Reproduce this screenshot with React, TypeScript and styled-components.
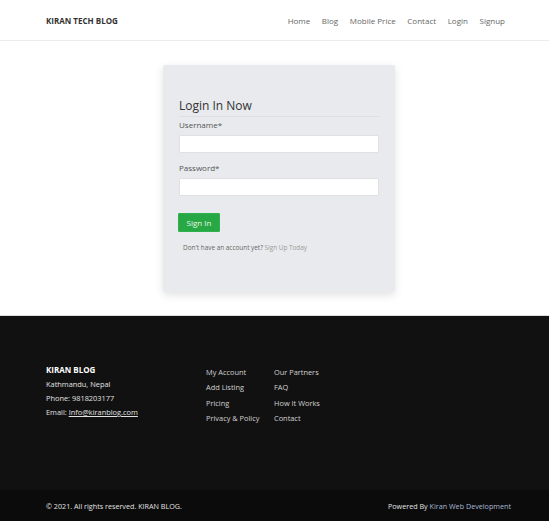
import React from "react";
import styled, { createGlobalStyle } from "styled-components";

const Global = createGlobalStyle`
  * { box-sizing: border-box; }
  body { margin: 0; font-family: "Open Sans", "Noto Sans", sans-serif; background: #fff; }
  a { text-decoration: none; color: inherit; }
`;

const Header = styled.header`
  height: 41px;
  border-bottom: 1px solid #ececec;
  background: #fff;
`;

const Container = styled.div<{ $right: number }>`
  margin: 0 ${(p) => p.$right}px 0 46px;
  height: 100%;
  display: flex;
  align-items: center;
  justify-content: space-between;
`;

const Brand = styled.a`
  font-size: 8px;
  font-weight: 700;
  color: #333;
`;

const Nav = styled.nav`
  display: flex;
  gap: 11.6px;
`;

const NavLink = styled.a`
  font-size: 8px;
  color: #666;
`;

const Main = styled.main`
  height: 274px;
  display: flex;
  justify-content: center;
  padding: 24px 0 0 9px;
`;

const Card = styled.div`
  width: 232px;
  height: 227px;
  background: #e8eaed;
  border-radius: 2px;
  box-shadow: 0 3px 8px rgba(0, 0, 0, 0.12);
  padding: 32px 16px 0 16px;
`;

const Title = styled.h2`
  margin: 0;
  font-size: 12px;
  font-weight: 400;
  color: #333;
  padding-bottom: 2px;
  border-bottom: 1px solid #dcdfe3;
`;

const Label = styled.label<{ $top: number }>`
  display: block;
  font-size: 8px;
  color: #555;
  margin-top: ${(p) => p.$top}px;
  height: 11px;
  line-height: 11px;
`;

const Input = styled.input`
  display: block;
  width: 200px;
  height: 18px;
  margin-top: 5px;
  border: 1px solid #e0e0e0;
  background: #fff;
  border-radius: 1px;
  outline: none;
`;

const Button = styled.button`
  display: block;
  margin: 17px 0 0 -1px;
  width: 42px;
  height: 19px;
  background: #28a745;
  border: 1px solid #2fb14d;
  color: #e9f7ec;
  font-family: "Open Sans", sans-serif;
  font-size: 8px;
  padding: 0;
  border-radius: 1px;
`;

const Note = styled.p`
  margin: 11px 0 0 4px;
  font-size: 6.4px;
  color: #666;
`;

const NoteLink = styled.a`
  color: #9a9a9a;
`;

const Footer = styled.footer`
  background: #111;
  border-top: 1px solid #ddd;
`;

const FooterTop = styled.div`
  margin: 0 0 0 46px;
  height: 174px;
  display: grid;
  grid-template-columns: 160px 68px 80px;
  padding-top: 47px;
`;

const FooterCol = styled.div`
  display: flex;
  flex-direction: column;
`;

const FooterTitle = styled.div`
  font-size: 8px;
  font-weight: 700;
  color: #fff;
  line-height: 14px;
`;

const FooterText = styled.div`
  font-size: 7.4px;
  color: #e2e2e2;
  line-height: 14px;
`;

const Mail = styled.a`
  text-decoration: underline;
`;

const LinkList = styled.ul`
  list-style: none;
  margin: 2px 0 0 0;
  padding: 0;
`;

const LinkItem = styled.li`
  font-size: 7.4px;
  color: #d2d2d2;
  line-height: 15.3px;
`;

const Bottom = styled.div`
  background: #0b0b0b;
  height: 31px;
`;

const Small = styled.span`
  font-size: 7.2px;
  color: #e2e2e2;
`;

const Highlight = styled.a`
  color: #a9b8d6;
`;

export default function App() {
  return (
    <>
      <Global />
      <Header>
        <Container $right={44}>
          <Brand href="#">KIRAN TECH BLOG</Brand>
          <Nav>
            {["Home", "Blog", "Mobile Price", "Contact", "Login", "Signup"].map((n) => (
              <NavLink key={n} href="#">{n}</NavLink>
            ))}
          </Nav>
        </Container>
      </Header>
      <Main>
        <Card>
          <Title>Login In Now</Title>
          <Label $top={2}>Username*</Label>
          <Input type="text" />
          <Label $top={9}>Password*</Label>
          <Input type="password" />
          <Button>Sign In</Button>
          <Note>
            Don't have an account yet? <NoteLink href="#">Sign Up Today</NoteLink>
          </Note>
        </Card>
      </Main>
      <Footer>
        <FooterTop>
          <FooterCol>
            <FooterTitle>KIRAN BLOG</FooterTitle>
            <FooterText>Kathmandu, Nepal</FooterText>
            <FooterText>Phone: 9818203177</FooterText>
            <FooterText>
              Email: <Mail href="#">Info@kiranblog.com</Mail>
            </FooterText>
          </FooterCol>
          <FooterCol>
            <LinkList>
              {["My Account", "Add Listing", "Pricing", "Privacy & Policy"].map((l) => (
                <LinkItem key={l}>{l}</LinkItem>
              ))}
            </LinkList>
          </FooterCol>
          <FooterCol>
            <LinkList>
              {["Our Partners", "FAQ", "How It Works", "Contact"].map((l) => (
                <LinkItem key={l}>{l}</LinkItem>
              ))}
            </LinkList>
          </FooterCol>
        </FooterTop>
        <Bottom>
          <Container $right={38}>
            <Small>© 2021. All rights reserved. KIRAN BLOG.</Small>
            <Small>
              Powered By <Highlight href="#">Kiran Web Development</Highlight>
            </Small>
          </Container>
        </Bottom>
      </Footer>
    </>
  );
}
